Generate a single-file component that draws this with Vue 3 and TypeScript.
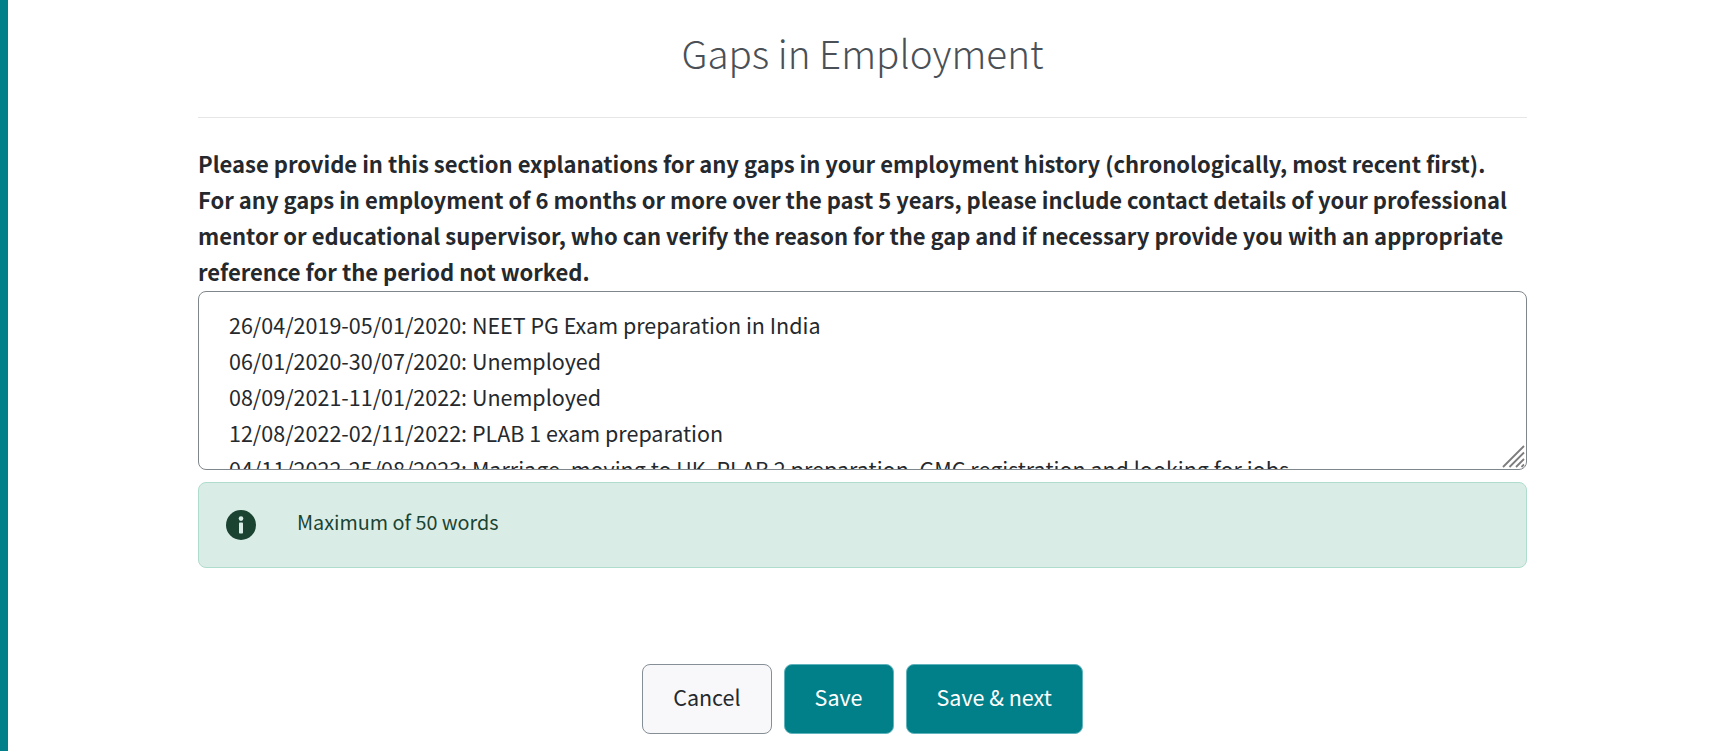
<script setup lang="ts">
const entries: string[] = [
  '26/04/2019-05/01/2020: NEET PG Exam preparation in India',
  '06/01/2020-30/07/2020: Unemployed',
  '08/09/2021-11/01/2022: Unemployed',
  '12/08/2022-02/11/2022: PLAB 1 exam preparation',
  '04/11/2022-25/08/2023: Marriage, moving to UK, PLAB 2 preparation, GMC registration and looking for jobs',
]
const text = entries.join('\n')
</script>

<template>
  <div class="page">
    <main class="content">
      <h1 class="title">Gaps in Employment</h1>
      <hr class="rule" />
      <label class="question" for="gaps">
        Please provide in this section explanations for any gaps in your employment history (chronologically, most recent first).<br />
        For any gaps in employment of 6 months or more over the past 5 years, please include contact details of your professional mentor or educational supervisor, who can verify the reason for the gap and if necessary provide you with an appropriate reference for the period not worked.
      </label>
      <div class="answer-wrap">
        <textarea id="gaps" class="answer" :value="text"></textarea>
        <svg class="grip" viewBox="0 0 24 24" width="24" height="24" aria-hidden="true">
          <path d="M2 23 23 2M8.5 23 23 8.5M15 23 23 15M20.5 23 23 20.5" fill="none" stroke="#7d7d7d" stroke-width="1.8" />
        </svg>
      </div>
      <div class="alert">
        <svg class="alert-icon" viewBox="0 0 30 30" width="30" height="30" aria-hidden="true">
          <circle cx="15" cy="15" r="15" fill="#1b4332" />
          <circle cx="15" cy="8.6" r="2.3" fill="#d9ede6" />
          <rect x="13" y="12.6" width="4" height="11" rx="0.8" fill="#d9ede6" />
        </svg>
        <span class="alert-text">Maximum of 50 words</span>
      </div>
      <div class="actions">
        <button class="btn btn-light" type="button"><span class="btn-label">Cancel</span></button>
        <button class="btn btn-primary" type="button"><span class="btn-label">Save</span></button>
        <button class="btn btn-primary" type="button"><span class="btn-label">Save &amp; next</span></button>
      </div>
    </main>
  </div>
</template>

<style>
html, body { margin: 0; background: #fff; overflow: hidden; }
</style>

<style scoped>
.page {
  box-sizing: border-box;
  height: 751px;
  border-left: 8px solid #02808a;
  font-family: "Noto Sans CJK JP", "Noto Sans", sans-serif;
  color: #212529;
  overflow: hidden;
}
.content {
  width: 1329px;
  margin-left: 190px;
  display: flex;
  flex-direction: column;
}
.title {
  margin: 23px 0 0;
  height: 58px;
  line-height: 58px;
  text-align: center;
  font-size: 38.6px;
  font-weight: 200;
  color: #4a5056;
}
.rule {
  width: 100%;
  margin: 36px 0 0;
  border: 0;
  border-top: 1px solid #e4e6e8;
}
.question {
  margin-top: 27px;
  font-size: 22px;
  line-height: 36px;
  font-weight: 700;
  color: #25292d;
}
.answer-wrap {
  position: relative;
  display: flex;
  margin-top: 2px;
}
.answer {
  box-sizing: border-box;
  width: 100%;
  height: 179px;
  padding: 15px 30px;
  font: inherit;
  font-size: 21.5px;
  line-height: 36px;
  color: #25292d;
  border: 1px solid #7f878c;
  border-radius: 8px;
  outline: none;
  overflow: hidden;
  resize: none;
  white-space: pre-wrap;
}
.grip {
  position: absolute;
  right: 2px;
  bottom: 2px;
  pointer-events: none;
}
.alert {
  box-sizing: border-box;
  display: flex;
  align-items: center;
  height: 86px;
  margin-top: 12px;
  padding: 0 27px;
  background: #d9ede6;
  border: 1px solid #b0dccb;
  border-radius: 8px;
  color: #1b4332;
}
.alert-text {
  margin-left: 41px;
  padding-bottom: 8px;
  font-size: 19.8px;
}
.actions {
  display: flex;
  justify-content: center;
  gap: 12px;
  margin-top: 96px;
}
.btn {
  box-sizing: border-box;
  height: 70px;
  padding: 0 30px;
  font: inherit;
  font-size: 21.5px;
  border-radius: 8px;
}
.btn-label {
  display: block;
  padding-bottom: 6px;
}
.btn-light {
  background: #f8f8fa;
  color: #25292d;
  border: 1px solid #868e96;
}
.btn-primary {
  background: #02808a;
  color: #fff;
  border: 1px solid #5fb3bd;
}
</style>
